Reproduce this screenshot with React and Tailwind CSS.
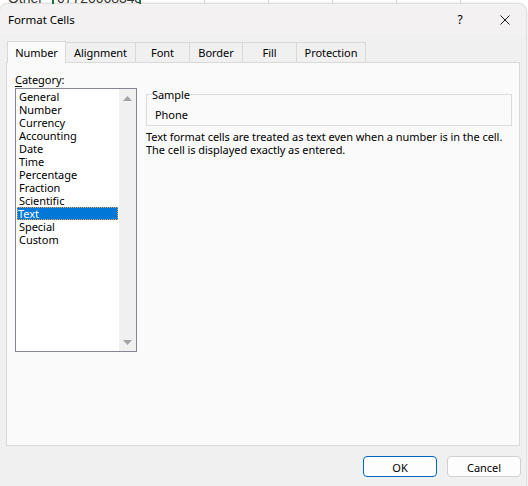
export default function App() {
  const cats = ["General", "Number", "Currency", "Accounting", "Date", "Time", "Percentage", "Fraction", "Scientific", "Text", "Special", "Custom"];
  const tabs = [
    ["Alignment", "w-[70px]"],
    ["Font", "w-[54px]"],
    ["Border", "w-[53px]"],
    ["Fill", "w-[54px]"],
    ["Protection", "w-[69px]"],
  ];
  return (
    <div className="w-[528px] h-[486px] overflow-hidden bg-white font-['Noto_Sans',sans-serif] text-[11px] tracking-[-0.05px] leading-[16px] text-black">
      {/* spreadsheet behind */}
      <div className="h-[4px] flex overflow-hidden bg-white font-['Liberation_Sans',sans-serif] text-[14px] text-[#333]">
        <div className="w-[52px] pl-[8px] overflow-hidden"><div className="-mt-[10px]">Other</div></div>
        <div className="w-[89px] border-x-2 border-[#217346] pl-[3px] overflow-hidden flex"><div className="-mt-[10px]">07720068343</div><div className="ml-auto w-[10px] bg-[#c8c8c8]"></div></div>
        <div className="w-[64px] border-r border-[#d4d4d4]"></div>
        <div className="w-[64px] border-r border-[#d4d4d4]"></div>
        <div className="w-[64px] border-r border-[#d4d4d4]"></div>
        <div className="w-[64px] border-r border-[#d4d4d4]"></div>
        <div className="w-[64px] border-r border-[#d4d4d4]"></div>
      </div>
      {/* dialog */}
      <div className="w-[526px] h-[490px] bg-[#f0f0f0] rounded-t-[8px] rounded-b-[8px] shadow-[0_0_3px_rgba(0,0,0,0.35)] flex flex-col">
        <div className="h-[30px] shrink-0 bg-[#f3f1f1] rounded-t-[8px] flex items-center pl-[8px] text-[11.5px]">
          <span className="mt-[1px]">Format Cells</span>
          <span className="ml-auto w-[12px] text-center text-[12px] mt-[1px]">?</span>
          <svg className="ml-[34px] mr-[16px] mt-[1px]" width="10" height="10" viewBox="0 0 10 10">
            <path d="M0.5 0.5 L9.5 9.5 M9.5 0.5 L0.5 9.5" stroke="#1a1a1a" strokeWidth="1" fill="none" />
          </svg>
        </div>
        {/* tabs */}
        <div className="flex items-end pl-[7px] pt-[7px] relative z-10">
          <div className="w-[59px] h-[22px] -mb-px bg-[#fafafa] border border-b-0 border-[#d9d9d9] flex items-center justify-center pt-[1px]">Number</div>
          {tabs.map(([t, w]) => (
            <div key={t} className={`${w} h-[20px] border border-l-0 border-b-0 border-[#d9d9d9] bg-[#f0f0f0] flex items-center justify-center pt-[1px]`}>{t}</div>
          ))}
        </div>
        {/* panel */}
        <div className="mx-[6px] w-[514px] h-[384px] shrink-0 bg-[#fafafa] border border-[#d9d9d9] flex pl-[8px] pt-[9px]">
          <div className="w-[122px] shrink-0 flex flex-col">
            <div className="h-[16px] leading-[16px]"><span className="underline underline-offset-[2px]">C</span>ategory:</div>
            <div className="w-[122px] h-[264px] border border-[#868690] bg-white flex">
              <div className="w-[103px] px-px pt-px flex flex-col leading-[12px]">
                {cats.map((c) =>
                  c === "Text" ? (
                    <div key={c} className="h-[13px] bg-[#0078d7] text-white pl-[1px] pt-px outline outline-1 outline-dotted outline-[#f0a050] -outline-offset-1">{c}</div>
                  ) : (
                    <div key={c} className="h-[13px] pl-[2px] pt-px">{c}</div>
                  )
                )}
              </div>
              <div className="w-[17px] bg-[#f0f0f0] flex flex-col items-center justify-between pt-[7px] pb-[6px]">
                <svg width="9" height="5" viewBox="0 0 9 5"><polygon points="4.5,0 9,5 0,5" fill="#a3a3a3" /></svg>
                <svg width="9" height="5" viewBox="0 0 9 5"><polygon points="0,0 9,0 4.5,5" fill="#a3a3a3" /></svg>
              </div>
            </div>
          </div>
          <div className="ml-[9px] w-[366px] mt-[14px] flex flex-col">
            <fieldset className="border border-[#dcdcdc] pb-[2px] h-[40px]">
              <legend className="ml-[5px] p-0 leading-[16px] pt-[1px]">Sample</legend>
              <div className="mt-[4px] pl-[8px] leading-[16px]">Phone</div>
            </fieldset>
            <div className="mt-[4px] leading-[13px] whitespace-nowrap">
              <div>Text format cells are treated as text even when a number is in the cell.</div>
              <div>The cell is displayed exactly as entered.</div>
            </div>
          </div>
        </div>
        {/* buttons */}
        <div className="flex mt-[10px] pl-[363px] gap-[10px]">
          <button className="w-[74px] h-[21px] bg-[#fdfdfd] border border-[#0067c0] rounded-[4px] leading-[16px] pt-[2px]">OK</button>
          <button className="w-[74px] h-[21px] bg-[#fdfdfd] border border-[#d0d0d0] rounded-[4px] leading-[16px] pt-[2px]">Cancel</button>
        </div>
      </div>
    </div>
  );
}
